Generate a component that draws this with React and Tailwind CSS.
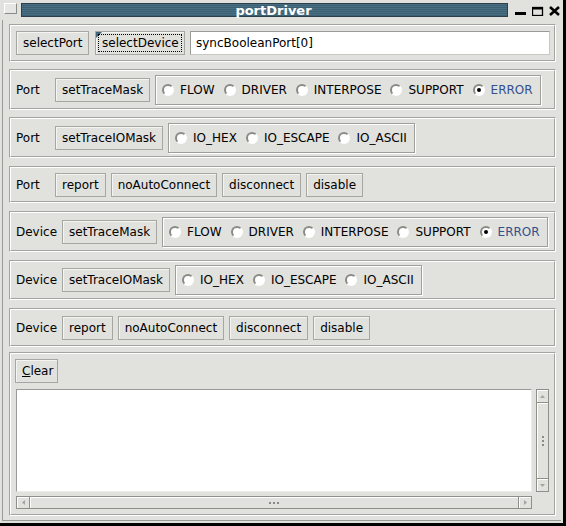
import React from 'react';

const FONT = "font-['DejaVu_Sans','Liberation_Sans',sans-serif]";

const Btn = ({ children, className = '' }) => (
  <button
    className={`relative h-[24px] px-[6px] border border-[#a6a6a2] bg-[#e1e1dd] shadow-[inset_1px_1px_0_#f4f4f2] text-[12px] leading-none text-black whitespace-nowrap shrink-0 ${className}`}
  >
    {children}
  </button>
);

const Radio = ({ label, checked }) => (
  <div className="flex items-center gap-[6px]">
    <div className="w-[12px] h-[12px] rounded-full border-[2px] border-t-[#8a8a86] border-l-[#8a8a86] border-r-white border-b-white bg-white flex items-center justify-center">
      {checked && <div className="w-[4px] h-[4px] rounded-full bg-black" />}
    </div>
    <span className={checked ? 'text-[#33508f]' : 'text-black'}>{label}</span>
  </div>
);

const RadioGroup = ({ items, selected }) => (
  <div className="h-[30px] flex items-center gap-[9px] pl-[6px] pr-[7px] border border-[#9e9e9a] shadow-[inset_1px_1px_0_#fff,1px_1px_0_#fff] text-[12px] whitespace-nowrap shrink-0">
    {items.map(it => (
      <Radio key={it} label={it} checked={it === selected} />
    ))}
  </div>
);

// etched group frame
const Frame = ({ className = '', inner = '', children }) => (
  <div className={`border border-t-[#a3a39f] border-l-[#a3a39f] border-b-white border-r-white ${className}`}>
    <div className={`h-full border border-t-white border-l-white border-b-[#a3a39f] border-r-[#a3a39f] ${inner}`}>
      {children}
    </div>
  </div>
);

const TRACE = ['FLOW', 'DRIVER', 'INTERPOSE', 'SUPPORT', 'ERROR'];
const TRACE_IO = ['IO_HEX', 'IO_ESCAPE', 'IO_ASCII'];

const Grip = ({ vertical }) => (
  <div className={`flex ${vertical ? 'flex-col' : 'flex-row'} gap-[2px]`}>
    <div className="w-[2px] h-[2px] bg-[#8a8a86]" />
    <div className="w-[2px] h-[2px] bg-[#8a8a86]" />
    <div className="w-[2px] h-[2px] bg-[#8a8a86]" />
  </div>
);

export default function App() {
  const row = 'h-full flex items-center pl-[5px] pr-[4px] gap-[5px] text-[12px] text-black';

  return (
    <div className={`w-[566px] h-[526px] bg-[#e1e1dd] border-r-[3px] border-b-[3px] border-black overflow-hidden ${FONT}`}>
      {/* Title bar */}
      <div className="h-[20px] flex items-start">
        <div className="ml-[4px] mt-[3px] w-[13px] h-[11px] border border-t-white border-l-white border-b-[#8a8a86] border-r-[#8a8a86] bg-[#e6e6e2]" />
        <div className="ml-[4px] mt-[3px] w-[487px] h-[14px] border border-[#2c3f4a] bg-[repeating-linear-gradient(to_bottom,#4a6e82_0px,#4a6e82_1px,#3b5f73_1px,#3b5f73_2px)] flex items-center justify-center pl-[18px]">
          <span className="text-white font-bold text-[13px] leading-none">portDriver</span>
        </div>
        <div className="ml-[7px] flex items-start gap-[5px] mt-[6px]">
          <svg width="12" height="10" viewBox="0 0 12 10">
            <rect x="0" y="6" width="11" height="3" fill="#000" />
          </svg>
          <svg width="12" height="10" viewBox="0 0 12 10">
            <rect x="0.5" y="1.5" width="10" height="8" fill="none" stroke="#000" strokeWidth="1.3" />
            <rect x="0" y="1" width="11" height="2.5" fill="#000" />
          </svg>
          <svg width="12" height="10" viewBox="0 0 12 10">
            <path d="M1 1 L10 9 M10 1 L1 9" stroke="#000" strokeWidth="2.6" />
          </svg>
        </div>
      </div>

      {/* Client area */}
      <div className="ml-[2px] w-[559px] h-[501px] border-l border-b border-[#9a9a96] pt-[4px] pl-[6px]">
        <Frame className="w-[547px] h-[38px]" inner={row}>
          <Btn className="w-[73px]">selectPort</Btn>
          <Btn className="w-[90px] ml-[1px]">
            <span className="absolute left-0 top-0 w-[6px] h-[6px] bg-[#3d6479] [clip-path:polygon(0_0,100%_0,0_100%)]" />
            <span className="absolute inset-[2px] border border-dotted border-black" />
            selectDevice
          </Btn>
          <div className="flex-1 h-[24px] border border-t-[#9a9a96] border-l-[#9a9a96] border-b-[#c8c8c4] border-r-[#c8c8c4] bg-white flex items-center pl-[5px] text-[12px]">
            syncBooleanPort[0]
          </div>
        </Frame>

        <Frame className="w-[547px] h-[41px] mt-[7px]" inner={row}>
          <span className="w-[34px]">Port</span>
          <Btn>setTraceMask</Btn>
          <RadioGroup items={TRACE} selected="ERROR" />
        </Frame>

        <Frame className="w-[547px] h-[41px] mt-[7px]" inner={row}>
          <span className="w-[34px]">Port</span>
          <Btn>setTraceIOMask</Btn>
          <RadioGroup items={TRACE_IO} />
        </Frame>

        <Frame className="w-[547px] h-[37px] mt-[8px]" inner={row}>
          <span className="w-[34px]">Port</span>
          <Btn>report</Btn>
          <Btn>noAutoConnect</Btn>
          <Btn>disconnect</Btn>
          <Btn>disable</Btn>
        </Frame>

        <Frame className="w-[547px] h-[41px] mt-[8px]" inner={row}>
          <span className="w-[41px]">Device</span>
          <Btn>setTraceMask</Btn>
          <RadioGroup items={TRACE} selected="ERROR" />
        </Frame>

        <Frame className="w-[547px] h-[40px] mt-[8px]" inner={row}>
          <span className="w-[41px]">Device</span>
          <Btn>setTraceIOMask</Btn>
          <RadioGroup items={TRACE_IO} />
        </Frame>

        <Frame className="w-[547px] h-[39px] mt-[8px]" inner={row}>
          <span className="w-[41px]">Device</span>
          <Btn>report</Btn>
          <Btn>noAutoConnect</Btn>
          <Btn>disconnect</Btn>
          <Btn>disable</Btn>
        </Frame>

        {/* Log panel */}
        <Frame className="w-[547px] h-[164px] mt-[5px]" inner="h-full flex flex-col items-start pl-[4px] pt-[5px]">
          <Btn className="w-[43px]">
            <span className="underline">C</span>lear
          </Btn>
          <div className="mt-[6px] ml-[1px] flex gap-[4px]">
            <div className="w-[516px] h-[103px] bg-white border border-t-[#9a9a96] border-l-[#9a9a96] border-b-[#ececea] border-r-[#ececea]" />
            <div className="w-[13px] h-[103px] border border-[#8e8e8a] flex flex-col">
              <div className="h-[13px] border-b border-[#8e8e8a] shadow-[inset_1px_1px_0_#fff] flex items-center justify-center">
                <svg width="5" height="3" viewBox="0 0 5 3"><path d="M2.5 0 L5 3 L0 3 Z" fill="#a4a4a0" /></svg>
              </div>
              <div className="flex-1 shadow-[inset_1px_1px_0_#fff] flex items-center justify-center">
                <Grip vertical />
              </div>
              <div className="h-[13px] border-t border-[#8e8e8a] shadow-[inset_1px_1px_0_#fff] flex items-center justify-center">
                <svg width="5" height="3" viewBox="0 0 5 3"><path d="M0 0 L5 0 L2.5 3 Z" fill="#a4a4a0" /></svg>
              </div>
            </div>
          </div>
          <div className="mt-[4px] ml-[1px] w-[516px] h-[13px] border border-[#8e8e8a] flex">
            <div className="w-[13px] border-r border-[#8e8e8a] shadow-[inset_1px_1px_0_#fff] flex items-center justify-center">
              <svg width="3" height="5" viewBox="0 0 3 5"><path d="M0 2.5 L3 0 L3 5 Z" fill="#a4a4a0" /></svg>
            </div>
            <div className="flex-1 shadow-[inset_1px_1px_0_#fff] flex items-center justify-center">
              <Grip />
            </div>
            <div className="w-[13px] border-l border-[#8e8e8a] shadow-[inset_1px_1px_0_#fff] flex items-center justify-center">
              <svg width="3" height="5" viewBox="0 0 3 5"><path d="M0 0 L3 2.5 L0 5 Z" fill="#a4a4a0" /></svg>
            </div>
          </div>
        </Frame>
      </div>
    </div>
  );
}
